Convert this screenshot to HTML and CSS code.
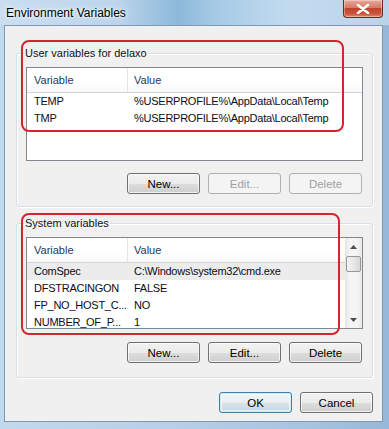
FILE: index.html
```html
<!DOCTYPE html>
<html lang="en">
  <head>
    <meta charset="UTF-8" />
    <title>Environment Variables</title>
    <link rel="stylesheet" href="styles.css">
  </head>
  <body>
    <div class="window">
      <div class="titlebar">
        <span class="title">Environment Variables</span>
        <span class="close">
          <svg width="14" height="10" viewBox="0 0 14 10">
            <path d="M2 1 L12 9 M12 1 L2 9" stroke="#fff" stroke-width="2.6" stroke-linecap="round" />
          </svg>
        </span>
      </div>

      <div class="client">
        <!-- User variables -->
        <fieldset class="group group-user">
          <legend>User variables for delaxo</legend>
          <div class="list list-user">
            <div class="cols">
              <div class="row head">
                <span class="cell name">Variable</span>
                <span class="cell">Value</span>
              </div>
              <div class="row">
                <span class="cell name">TEMP</span>
                <span class="cell">%USERPROFILE%\AppData\Local\Temp</span>
              </div>
              <div class="row">
                <span class="cell name">TMP</span>
                <span class="cell">%USERPROFILE%\AppData\Local\Temp</span>
              </div>
            </div>
          </div>
          <div class="buttons">
            <button class="btn">New...</button>
            <button class="btn" disabled>Edit...</button>
            <button class="btn" disabled>Delete</button>
          </div>
        </fieldset>

        <!-- System variables -->
        <fieldset class="group group-system">
          <legend>System variables</legend>
          <div class="list list-system">
            <div class="cols">
              <div class="row head">
                <span class="cell name">Variable</span>
                <span class="cell">Value</span>
              </div>
              <div class="row selected">
                <span class="cell name">ComSpec</span>
                <span class="cell">C:\Windows\system32\cmd.exe</span>
              </div>
              <div class="row">
                <span class="cell name">DFSTRACINGON</span>
                <span class="cell">FALSE</span>
              </div>
              <div class="row">
                <span class="cell name">FP_NO_HOST_C...</span>
                <span class="cell">NO</span>
              </div>
              <div class="row">
                <span class="cell name">NUMBER_OF_P...</span>
                <span class="cell">1</span>
              </div>
            </div>
            <div class="scrollbar">
              <span class="arrow">
                <svg width="7" height="4" viewBox="0 0 7 4"><path d="M0 4 L3.5 0 L7 4 Z" fill="#4d4d4d" /></svg>
              </span>
              <span class="thumb"></span>
              <span class="track"></span>
              <span class="arrow">
                <svg width="7" height="4" viewBox="0 0 7 4"><path d="M0 0 L3.5 4 L7 0 Z" fill="#4d4d4d" /></svg>
              </span>
            </div>
          </div>
          <div class="buttons">
            <button class="btn">New...</button>
            <button class="btn">Edit...</button>
            <button class="btn">Delete</button>
          </div>
        </fieldset>

        <div class="footer">
          <button class="btn default">OK</button>
          <button class="btn">Cancel</button>
        </div>

        <!-- Red annotation marks -->
        <span class="mark mark-user"></span>
        <span class="mark mark-system"></span>
      </div>
    </div>
  </body>
</html>
```

FILE: styles.css
```css
/* General Reset */
* {
  margin: 0;
  padding: 0;
  box-sizing: border-box;
}

body {
  width: 389px;
  height: 429px;
  overflow: hidden;
  font-family: "Liberation Sans", Arial, sans-serif;
  font-size: 11px;
  color: #000;
}

/* Window frame */
.window {
  width: 389px;
  height: 429px;
  display: flex;
  flex-direction: column;
  background: linear-gradient(90deg, #c2d8ed 0%, #b7cfe7 45%, #a6c3e0 80%, #97b7d8 100%);
}

.titlebar {
  height: 25px;
  display: flex;
  align-items: flex-start;
  background: linear-gradient(90deg, #cadef0 0%, #bcd5ec 30%, #8db9da 46%, #a7cbe6 56%, #c3dbef 75%, #bcd4ea 100%);
}

.title {
  padding: 6px 0 0 6px;
  font-size: 12px;
  line-height: 14px;
  text-shadow: 0 0 6px #fff, 0 0 3px #fff;
}

.close {
  margin-left: auto;
  margin-right: 6px;
  width: 40px;
  height: 18px;
  display: flex;
  justify-content: center;
  align-items: center;
  border: 1px solid #6b2a22;
  border-top: none;
  border-radius: 0 0 4px 4px;
  background: linear-gradient(180deg, #e9a99b 0%, #d77a66 45%, #c2432b 50%, #c9543b 80%, #dd8a6e 100%);
  box-shadow: inset 0 0 0 1px rgba(255, 255, 255, 0.35);
}

/* Client area */
.client {
  flex: 1;
  position: relative;
  margin: 0 6px 7px 4px;
  padding: 19px 9px 0 11px;
  border: 1px solid #7f98b4;
  background: #f0f0f0;
}

.group {
  border: 1px solid #d5dfe5;
  border-radius: 3px;
  padding: 6px 9px 12px;
  box-shadow: inset 1px 1px 0 #fff, 1px 1px 0 #fff;
}

.group legend {
  margin-left: -2px;
  padding: 0 1px;
  font-size: 11px;
  line-height: 16px;
  color: #111;
}

.group-system {
  margin-top: 8px;
  padding-bottom: 14px;
}

/* List views */
.list {
  display: flex;
  border: 1px solid #828790;
  background: #fff;
  overflow: hidden;
}

.list-user {
  height: 94px;
}

.list-system {
  height: 92px;
}

.cols {
  flex: 1;
  overflow: hidden;
}

.row {
  display: grid;
  grid-template-columns: 101px 1fr;
  height: 17px;
  line-height: 17px;
  white-space: nowrap;
  letter-spacing: -0.25px;
  color: #0b0b1a;
}

.row.head {
  height: 25px;
  line-height: 24px;
  letter-spacing: 0;
  border-bottom: 1px solid #d5d5d5;
  background: linear-gradient(180deg, #fff 0%, #fff 60%, #f7f8fa 100%);
  color: #1e395b;
}

.row.selected {
  background: #ececec;
}

.cell {
  padding-left: 6px;
  overflow: hidden;
}

.cell.name {
  padding-left: 7px;
}

.row.head .cell.name {
  border-right: 1px solid #e5e5e5;
}

.scrollbar {
  width: 17px;
  display: flex;
  flex-direction: column;
  background: linear-gradient(90deg, #e5e5e5 0%, #f5f5f5 30%, #f5f5f5 70%, #e8e8e8 100%);
}

.scrollbar .arrow {
  height: 17px;
  display: flex;
  justify-content: center;
  align-items: center;
}

.scrollbar .thumb {
  height: 16px;
  margin: 1px 1px 0;
  border: 1px solid #979797;
  border-radius: 2px;
  background: linear-gradient(90deg, #f3f3f3 0%, #e8e8e8 50%, #d6d6d6 100%);
}

.scrollbar .track {
  flex: 1;
}

/* Buttons */
.buttons {
  display: flex;
  justify-content: flex-end;
  gap: 8px;
  margin-top: 12px;
  margin-right: 1px;
}

.group-system .buttons {
  margin-top: 13px;
}

.btn {
  width: 73px;
  height: 21px;
  font-family: inherit;
  font-size: 11.5px;
  color: #000;
  border: 1px solid #707070;
  border-radius: 3px;
  background: linear-gradient(180deg, #f2f2f2 0%, #ebebeb 50%, #dddddd 51%, #cfcfcf 100%);
  box-shadow: inset 0 0 0 1px rgba(255, 255, 255, 0.7);
}

.btn:disabled {
  color: #a0a0a0;
  border-color: #adb2b5;
  background: #f4f4f4;
  box-shadow: none;
}

.btn.default {
  border-color: #3c7fb1;
  box-shadow: inset 0 0 0 1px #cdeafb, inset 0 0 0 2px rgba(255, 255, 255, 0.6);
  background: linear-gradient(180deg, #f0f4f7 0%, #e8eef2 50%, #d9e2e8 51%, #cdd8df 100%);
}

.footer {
  display: flex;
  justify-content: flex-end;
  gap: 8px;
  margin-top: 14px;
}

/* Red annotation rectangles */
.mark {
  position: absolute;
  border: 2px solid #d3262f;
  border-radius: 8px;
  pointer-events: none;
}

.mark-user {
  left: 16px;
  top: 14px;
  width: 323px;
  height: 92px;
}

.mark-system {
  left: 16px;
  top: 187px;
  width: 319px;
  height: 122px;
}
```
